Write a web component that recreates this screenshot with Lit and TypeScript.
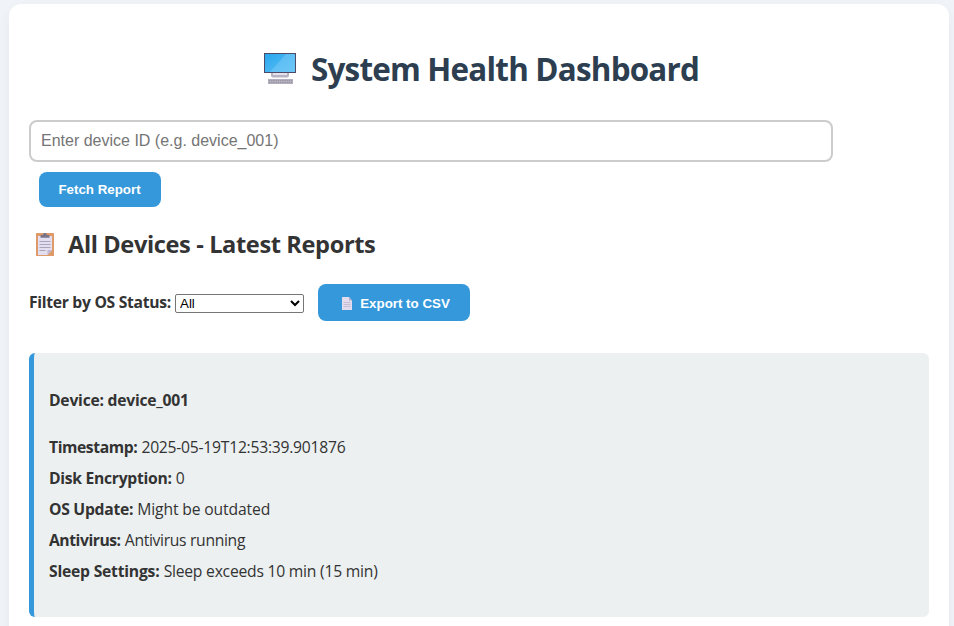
import { LitElement, html, css } from "lit";
import { customElement } from "lit/decorators.js";

const monitor = html`<svg class="monitor" viewBox="0 0 34 34" aria-hidden="true">
  <defs><linearGradient id="screen" x1="0" y1="0" x2="1" y2="1">
    <stop offset="0" stop-color="#28a7ee" /><stop offset="1" stop-color="#62c0f5" />
  </linearGradient></defs>
  <path d="M8 20v3.500q0 2 2 2h14q2 0 2-2V20h-2v3H10v-3z" fill="#b9b4c3" />
  <path d="M10 21h14v2H10z" fill="#e6e3ec" />
  <rect x="1" y="1" width="32" height="20" fill="#4d4a68" />
  <rect x="2" y="2" width="30" height="18" fill="url(#screen)" />
  <path d="M32 2v18H7L23 2z" fill="#79cbf8" opacity=".5" />
  <rect x="5" y="27" width="25" height="5" fill="#b3aebc" />
  <path d="M6 28.500h23M6 30.500h23" stroke="#8e899b" stroke-width=".8" stroke-dasharray="1.200 1" />
</svg>`;

const clipboard = html`<svg class="clipboard" viewBox="0 0 18 23" aria-hidden="true">
  <rect width="18" height="23" rx=".6" fill="#df9a69" />
  <path d="M2 3h14v14l-4.500 5H2z" fill="#e3dff0" />
  <path d="M16 17l-4.500 5v-5z" fill="#c0b8d4" />
  <path d="M4.500 4.800V2.800Q4.500 2 5.500 2H7Q7 0 9 0t2 2h1.500q1 0 1 .8v2z" fill="#78748a" />
  <path d="M3.500 8.500h11M3.500 11.500h11M3.500 14.500h11M3.500 17.500h6" stroke="#aaa5bb" stroke-width="1" />
</svg>`;

const sheet = html`<svg class="sheet" viewBox="0 0 10 13" aria-hidden="true">
  <path d="M0 0h7l3 3.500V13H0z" fill="#e2dcee" />
  <path d="M7 0l3 3.500H7z" fill="#b4aac9" />
  <path d="M1.500 5.500h7M1.500 7.500h7M1.500 9.500h7" stroke="#bcb5cd" stroke-width=".8" />
</svg>`;

const fields = [
  { key: "timestamp", label: "Timestamp:", value: "2025-05-19T12:53:39.901876" },
  { key: "disk", label: "Disk Encryption:", value: "0" },
  { key: "update", label: "OS Update:", value: "Might be outdated" },
  { key: "antivirus", label: "Antivirus:", value: "Antivirus running" },
  { key: "sleep", label: "Sleep Settings:", value: "Sleep exceeds 10 min (15 min)" },
];

@customElement("app-root")
export class AppRoot extends LitElement {
  static styles = css`
    :host {
      display: block;
      box-sizing: border-box;
      height: 626px;
      overflow: hidden;
      padding: 4px 5px 0 9px;
      background: #f0f4f8;
      color: #333;
      font: 15.7px/21px "Open Sans", "Noto Sans", sans-serif;
    }
    * { box-sizing: border-box; }
    .container {
      height: 700px;
      padding: 43px 20px 20px;
      background: #fff;
      border-radius: 12px;
      box-shadow: 0 4px 12px rgba(0, 0, 0, 0.05);
    }
    svg { display: block; flex: none; }
    h1 {
      display: flex;
      align-items: center;
      height: 43px;
      margin: 0 0 30px;
      padding-left: 234px;
      color: #2c3e50;
      font-size: 31.4px;
      line-height: 43px;
      font-weight: 700;
      letter-spacing: -0.79px;
      white-space: nowrap;
    }
    .monitor { width: 34px; height: 34px; margin-right: 14px; }
    .device-id {
      display: block;
      width: 804px;
      height: 42px;
      padding: 0 10px;
      border: 2px solid #ccc;
      border-radius: 8px;
      font: 16px "Liberation Sans", Arial, sans-serif;
    }
    .device-id::placeholder { color: #757575; }
    button {
      display: flex;
      align-items: center;
      justify-content: center;
      padding: 0;
      border: 0;
      border-radius: 8px;
      background: #3498db;
      color: #fff;
      font: bold 13.333px "Liberation Sans", Arial, sans-serif;
    }
    .fetch { width: 122px; height: 35px; margin: 10px 0 0 10px; padding-right: 1px; }
    h2 {
      display: flex;
      align-items: center;
      height: 32px;
      margin: 21px 0 24px;
      padding-left: 7px;
      font-size: 23.6px;
      line-height: 32px;
      font-weight: 700;
      letter-spacing: -0.38px;
      white-space: nowrap;
    }
    .clipboard { width: 18px; height: 23px; margin-right: 14px; }
    .filter { display: flex; align-items: center; height: 37px; }
    .filter label {
      width: 146px;
      font-weight: 700;
      letter-spacing: -0.3px;
      white-space: nowrap;
    }
    select {
      width: 129px;
      height: 19px;
      margin-top: 1px;
      padding: 0;
      border: 1px solid #767676;
      border-radius: 2px;
      background: #fff;
      color: #000;
      font: 13.333px "Liberation Sans", Arial, sans-serif;
    }
    .export { width: 152px; height: 37px; margin-left: 14px; padding: 1px 0 0 4px; }
    .sheet { width: 10px; height: 13px; margin-right: 8px; }
    .card {
      height: 264px;
      margin-top: 32px;
      padding: 37px 15px 0;
      border-left: 5px solid #3498db;
      border-radius: 6px;
      background: #ecf0f1;
    }
    h4 {
      margin: 0 0 26px;
      font-size: 15.7px;
      line-height: 21px;
      font-weight: 700;
      letter-spacing: -0.24px;
    }
    p {
      display: flex;
      gap: 4.2px;
      margin: 0 0 10px;
      line-height: 21px;
      white-space: nowrap;
    }
    .timestamp strong { letter-spacing: -0.42px; }
    .timestamp span { letter-spacing: -0.25px; }
    .disk strong { letter-spacing: -0.29px; }
    .update strong { letter-spacing: -0.28px; }
    .update span { letter-spacing: -0.15px; }
    .antivirus strong { letter-spacing: -0.45px; }
    .antivirus span { letter-spacing: -0.33px; }
    .sleep strong { letter-spacing: -0.22px; }
    .sleep span { letter-spacing: -0.235px; }
  `;

  render() {
    return html`<main class="container">
      <h1>${monitor}<span>System Health Dashboard</span></h1>
      <input class="device-id" placeholder="Enter device ID (e.g. device_001)" />
      <button class="fetch">Fetch Report</button>
      <h2>${clipboard}<span>All Devices - Latest Reports</span></h2>
      <div class="filter">
        <label for="status">Filter by OS Status:</label>
        <select id="status"><option>All</option></select>
        <button class="export">${sheet}<span>Export to CSV</span></button>
      </div>
      <section class="card">
        <h4>Device: device_001</h4>
        ${fields.map((f) => html`<p class=${f.key}><strong>${f.label}</strong><span>${f.value}</span></p>`)}
      </section>
    </main>`;
  }
}
